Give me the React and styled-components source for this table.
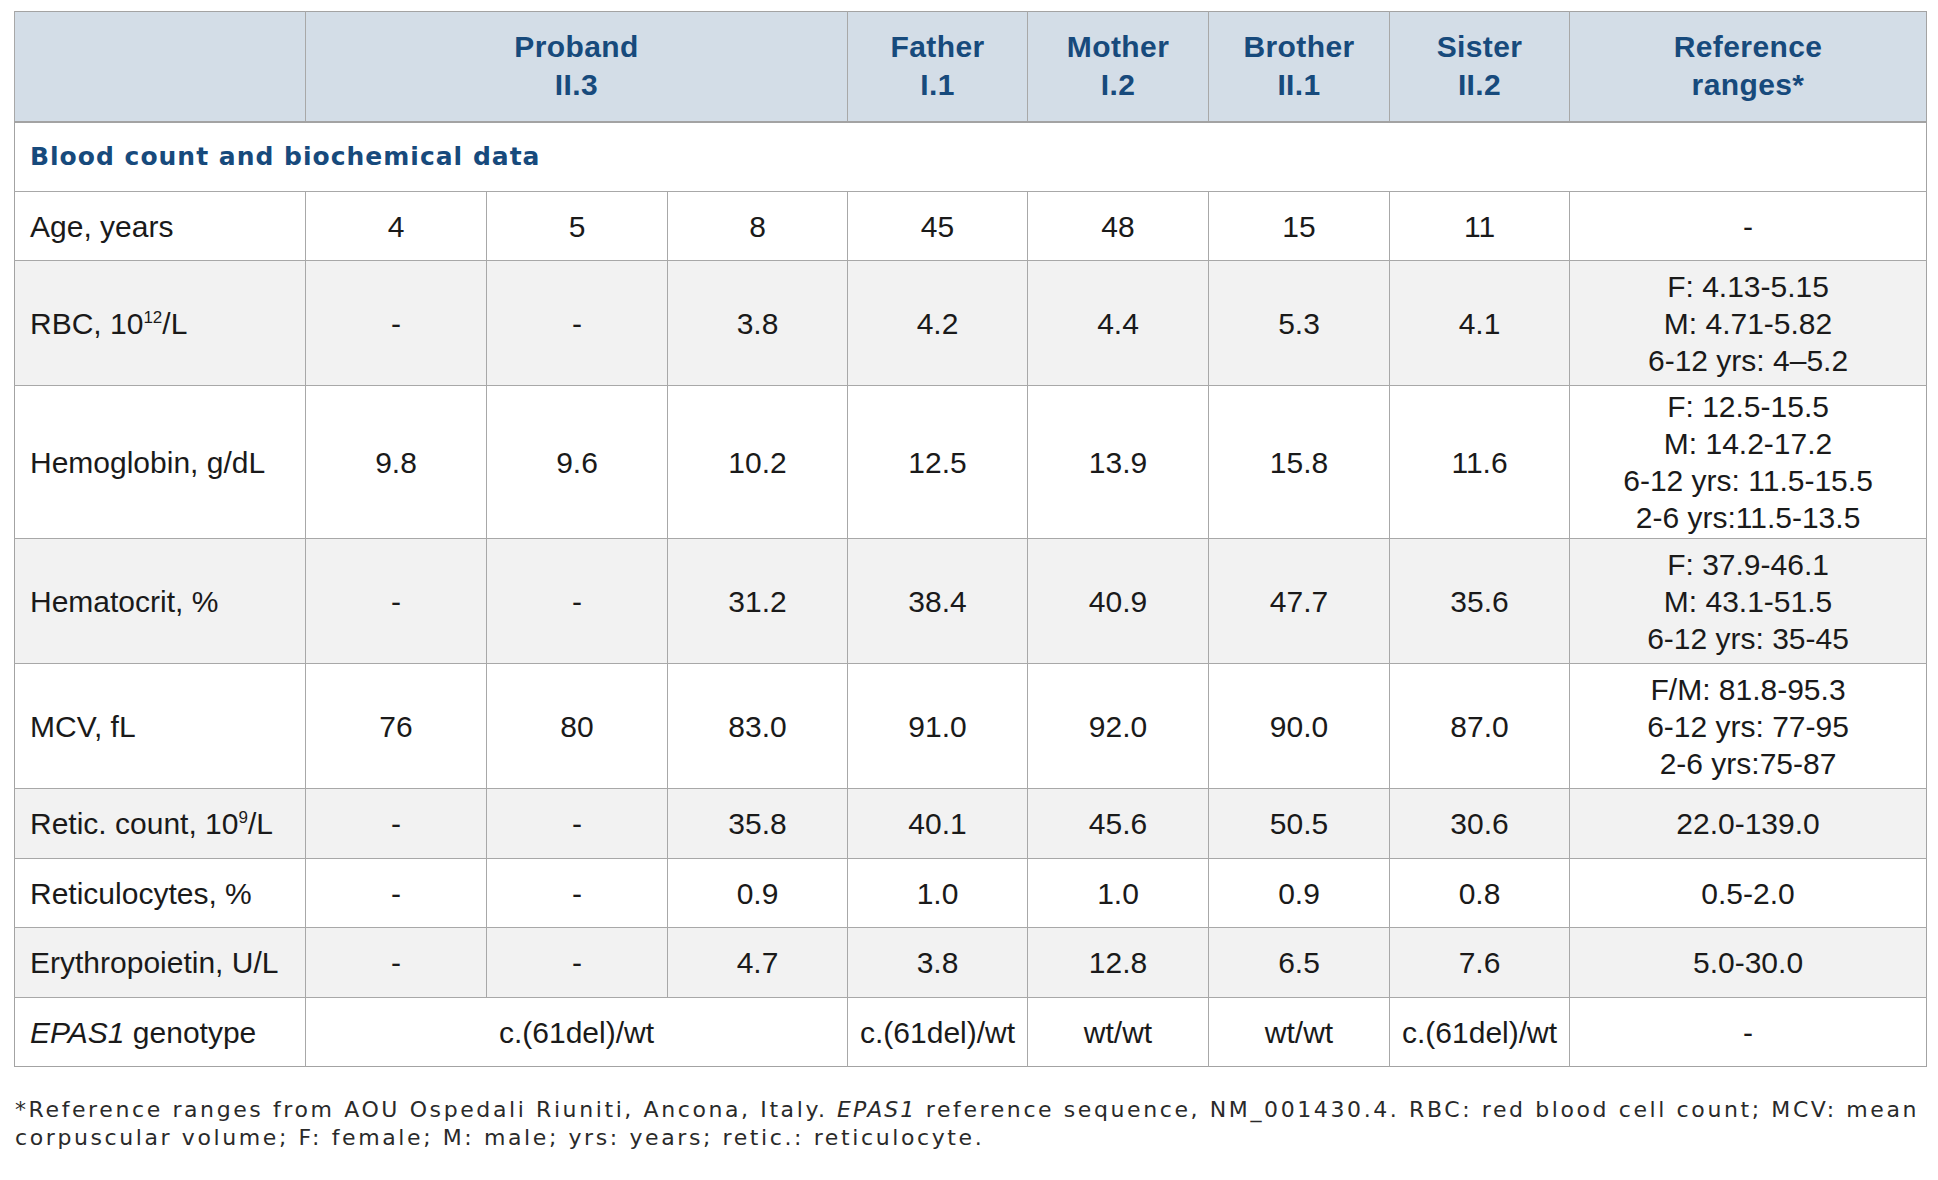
import React from "react";
import styled, { createGlobalStyle } from "styled-components";

const Global = createGlobalStyle`
    body {
        margin: 0;
        background: #ffffff;
        font-family: "Liberation Sans", Arial, sans-serif;
        color: #1a1a1a;
    }
`;

const members = [
    { name: "Father", id: "I.1" },
    { name: "Mother", id: "I.2" },
    { name: "Brother", id: "II.1" },
    { name: "Sister", id: "II.2" },
];

const rows = [
    { label: "Age, years", values: ["4", "5", "8", "45", "48", "15", "11"], ref: ["-"], h: 69 },
    { label: <>RBC, 10<sup>12</sup>/L</>, values: ["-", "-", "3.8", "4.2", "4.4", "5.3", "4.1"], ref: ["F: 4.13-5.15", "M: 4.71-5.82", "6-12 yrs: 4–5.2"], h: 125 },
    { label: "Hemoglobin, g/dL", values: ["9.8", "9.6", "10.2", "12.5", "13.9", "15.8", "11.6"], ref: ["F: 12.5-15.5", "M: 14.2-17.2", "6-12 yrs: 11.5-15.5", "2-6 yrs:11.5-13.5"], h: 153 },
    { label: "Hematocrit, %", values: ["-", "-", "31.2", "38.4", "40.9", "47.7", "35.6"], ref: ["F: 37.9-46.1", "M: 43.1-51.5", "6-12 yrs: 35-45"], h: 125 },
    { label: "MCV, fL", values: ["76", "80", "83.0", "91.0", "92.0", "90.0", "87.0"], ref: ["F/M: 81.8-95.3", "6-12 yrs: 77-95", "2-6 yrs:75-87"], h: 125 },
    { label: <>Retic. count, 10<sup>9</sup>/L</>, values: ["-", "-", "35.8", "40.1", "45.6", "50.5", "30.6"], ref: ["22.0-139.0"], h: 70 },
    { label: "Reticulocytes, %", values: ["-", "-", "0.9", "1.0", "1.0", "0.9", "0.8"], ref: ["0.5-2.0"], h: 69 },
    { label: "Erythropoietin, U/L", values: ["-", "-", "4.7", "3.8", "12.8", "6.5", "7.6"], ref: ["5.0-30.0"], h: 70 },
];

const App = () => {
    return (
        <Page>
            <Global />
            <Table>
                <colgroup>
                    <col style={{ width: 291 }} />
                    <col style={{ width: 181 }} />
                    <col style={{ width: 181 }} />
                    <col style={{ width: 180 }} />
                    <col style={{ width: 180 }} />
                    <col style={{ width: 181 }} />
                    <col style={{ width: 181 }} />
                    <col style={{ width: 180 }} />
                    <col style={{ width: 357 }} />
                </colgroup>
                <thead>
                    <HeadRow>
                        <HeadCell />
                        <HeadCell colSpan={3}>Proband<br />II.3</HeadCell>
                        {members.map((m) => (
                            <HeadCell key={m.name}>{m.name}<br />{m.id}</HeadCell>
                        ))}
                        <HeadCell>Reference<br />ranges*</HeadCell>
                    </HeadRow>
                </thead>
                <tbody>
                    <Row $h={70}>
                        <SectionCell colSpan={9}>Blood count and biochemical data</SectionCell>
                    </Row>
                    {rows.map((r, i) => (
                        <Row key={i} $h={r.h} $shaded={i % 2 === 1}>
                            <LabelCell>{r.label}</LabelCell>
                            {r.values.map((v, j) => (
                                <Cell key={j}>{v}</Cell>
                            ))}
                            <Cell>
                                {r.ref.map((line, k) => (
                                    <RefLine key={k}>{line}</RefLine>
                                ))}
                            </Cell>
                        </Row>
                    ))}
                    <Row $h={69}>
                        <LabelCell><i>EPAS1</i> genotype</LabelCell>
                        <Cell colSpan={3}>c.(61del)/wt</Cell>
                        <Cell>c.(61del)/wt</Cell>
                        <Cell>wt/wt</Cell>
                        <Cell>wt/wt</Cell>
                        <Cell>c.(61del)/wt</Cell>
                        <Cell>-</Cell>
                    </Row>
                </tbody>
            </Table>
            <Footnote>
                *Reference ranges from AOU Ospedali Riuniti, Ancona, Italy. <Gene>EPAS1</Gene> reference sequence, NM_001430.4. RBC: red blood cell count; MCV: mean corpuscular volume; F: female; M: male; yrs: years; retic.: reticulocyte.
            </Footnote>
        </Page>
    );
};

/* ------------------------------ STYLES ------------------------------ */

const Page = styled.div`
    padding: 11px 0 0 14px;
    width: 1912px;
`;

const Table = styled.table`
    width: 1912px;
    table-layout: fixed;
    border-collapse: collapse;
    border: 1.5px solid #a3a3a3;
`;

const HeadRow = styled.tr`
    height: 110px;
    background-color: #d3dde7;
    border-bottom: 2px solid #a3a3a3;
`;

const HeadCell = styled.th`
    border-left: 1px solid #a8a8a8;
    color: #174a7c;
    font-family: "Liberation Sans", Arial, sans-serif;
    font-weight: 700;
    font-size: 30px;
    letter-spacing: 0.4px;
    line-height: 38px;
    text-align: center;
    vertical-align: middle;
    padding: 0 4px;
`;

const Row = styled.tr`
    height: ${(p) => p.$h}px;
    background-color: ${(p) => (p.$shaded ? "#f2f2f2" : "#ffffff")};
    border-top: 1px solid #a8a8a8;
`;

const SectionCell = styled.td`
    color: #174a7c;
    font-family: "DejaVu Sans", sans-serif;
    font-weight: 700;
    font-size: 25px;
    letter-spacing: 1px;
    padding: 0 15px;
    text-align: left;
`;

const Cell = styled.td`
    border-left: 1px solid #a8a8a8;
    font-size: 30px;
    line-height: 37px;
    text-align: center;
    vertical-align: middle;
    padding: 0 4px;
    color: #1a1a1a;

    sup {
        font-size: 17px;
        line-height: 0;
    }
`;

const LabelCell = styled(Cell)`
    border-left: none;
    text-align: left;
    padding: 0 15px;
    white-space: nowrap;
`;

const RefLine = styled.div`
    white-space: nowrap;
`;

const Footnote = styled.p`
    margin: 29px 0 0 1px;
    width: 1922px;
    font-family: "DejaVu Sans", sans-serif;
    font-size: 22px;
    line-height: 28px;
    letter-spacing: 2.6px;
    color: #2a2a2a;
`;

const Gene = styled.i`
    letter-spacing: 2px;
`;

export default App;
